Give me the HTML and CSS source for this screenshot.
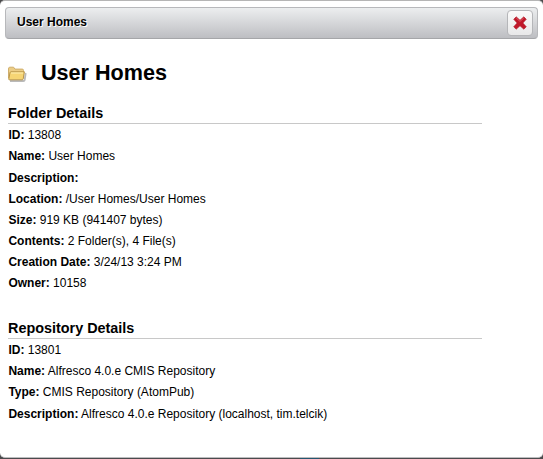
FILE: index.html
```html
<!DOCTYPE html>
<html lang="en">
<head>
<meta charset="utf-8">
<title>User Homes</title>
<link rel="stylesheet" href="styles.css">
</head>
<body>
<div class="dialog">
  <header class="titlebar">
    <span class="titlebar-text">User Homes</span>
    <button class="close" aria-label="Close">
      <svg width="14" height="14" viewBox="0 0 14 14">
        <path d="M3.2 .8 7 4.2 10.8.8 13.3 3.3 9.9 7 13.3 10.8 10.8 13.2 7 9.8 3.2 13.2.7 10.8 4.1 7 .7 3.3Z" fill="#c0182a" stroke="#b51f2b" stroke-width=".6" stroke-linejoin="round"/>
        <path d="M3.2 2 7 5.4 10.8 2" fill="none" stroke="#dc5660" stroke-width="1"/>
      </svg>
    </button>
  </header>
  <main class="content">
    <h1 class="heading">
      <svg class="folder" width="20" height="18" viewBox="0 0 20 18">
        <path d="M2 15h13.5q1 0 1.2-1l1-7" fill="none" stroke="#666" stroke-opacity=".45" stroke-width="1.8"/>
        <path d="M.5 12V3Q.5 1.2 1.8 1.2h3.8l1.4 1.9h7.3q1.2 0 1.2 1.4V12Z" fill="#eccd85" stroke="#cfae6c"/>
        <path d="M1.2 13.8Q.7 13.8.8 12.9L2 6.6Q2.2 5.8 3 5.8H16.4L15.2 12.9q-.2.9-1.1.9Z" fill="#f6d574" stroke="#b8954b" stroke-linejoin="round"/>
        <path d="M3 7h12" stroke="#fff0b4"/>
      </svg>
      <span>User Homes</span>
    </h1>
    <section class="section">
      <h2>Folder Details</h2>
      <p><b>ID:</b> 13808</p>
      <p><b>Name:</b> User Homes</p>
      <p><b>Description:</b></p>
      <p><b>Location:</b> /User Homes/User Homes</p>
      <p><b>Size:</b> 919 KB (941407 bytes)</p>
      <p><b>Contents:</b> 2 Folder(s), 4 File(s)</p>
      <p><b>Creation Date:</b> 3/24/13 3:24 PM</p>
      <p><b>Owner:</b> 10158</p>
    </section>
    <section class="section">
      <h2>Repository Details</h2>
      <p><b>ID:</b> 13801</p>
      <p><b>Name:</b> Alfresco 4.0.e CMIS Repository</p>
      <p><b>Type:</b> CMIS Repository (AtomPub)</p>
      <p><b>Description:</b> Alfresco 4.0.e Repository (localhost, tim.telcik)</p>
    </section>
  </main>
</div>
</body>
</html>
```
FILE: styles.css
```css
* { box-sizing: border-box; }
body {
  margin: 0;
  height: 459px;
  overflow: hidden;
  background: linear-gradient(90deg, transparent 300px, #24566f 300px, #24566f 319px, transparent 319px) bottom / 100% 1px no-repeat, #4b4b4d;
  color: #000;
  font-family: "Liberation Sans", Arial, sans-serif;
}
.dialog {
  height: 458px;
  padding: 6px 5px 0;
  background: #fff;
  border-top: 1px solid #b5b5b5;
  border-bottom: 1px solid #bdbdbf;
  border-radius: 5px;
}
.titlebar {
  display: flex;
  align-items: center;
  justify-content: space-between;
  height: 32px;
  padding: 0 4px 0 11px;
  border: 1px solid #b7b8bb;
  border-bottom-color: #a5a6a9;
  border-radius: 4px;
  background: linear-gradient(#eceeef, #d5d6d9 50%, #bdbec2);
}
.titlebar-text {
  padding-bottom: 2px;
  font-size: 12px;
  font-weight: bold;
  text-shadow: 1px 1px #fff;
}
.close {
  display: flex;
  align-items: center;
  justify-content: center;
  width: 26px;
  height: 26px;
  padding: 0;
  border: 1px solid #b5b6b9;
  border-radius: 4px;
  background: linear-gradient(#fafafa, #e8e8e9);
}
.content { padding: 21px 3px 0; }
.heading {
  display: flex;
  gap: 13px;
  height: 25px;
  margin: 0 0 18px;
  font-size: 21.6px;
  line-height: 25px;
}
.folder { margin-top: 6px; }
.section {
  width: 474px;
  margin-bottom: 23.46px;
}
h2 {
  height: 21px;
  margin: 0 0 1.35px;
  border-bottom: 1px solid #c8c8c8;
  font-size: 14.4px;
  line-height: 20px;
}
p {
  margin: 0;
  padding-left: 0.4px;
  font-size: 12px;
  line-height: 21.12px;
}
```
